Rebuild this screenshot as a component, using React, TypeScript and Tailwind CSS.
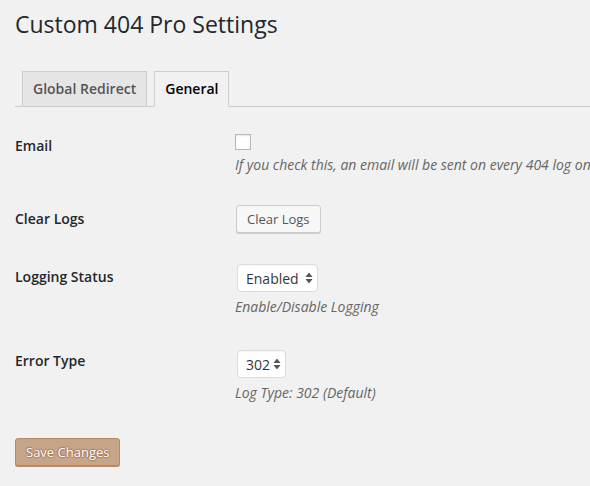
import React from "react";

function SelectArrows() {
  return (
    <svg width="8" height="12" viewBox="0 0 8 12" className="shrink-0">
      <path d="M4 0.5 L7.5 5 L0.5 5 Z" fill="#555" />
      <path d="M0.5 7 L7.5 7 L4 11.5 Z" fill="#555" />
    </svg>
  );
}

function FakeSelect({ value, width }: { value: string; width: string }) {
  return (
    <div
      className={`flex h-[28px] items-center justify-between rounded-[4px] border border-[#ddd] bg-white pl-[8px] pr-[4px] text-[14px] text-[#32373c] shadow-[inset_0_1px_2px_rgba(0,0,0,0.04)] ${width}`}
    >
      <span>{value}</span>
      <SelectArrows />
    </div>
  );
}

export default function App() {
  return (
    <div
      className="min-h-[486px] overflow-hidden bg-[#f1f1f1] pl-[15px] text-[#23282d]"
      style={{ fontFamily: '"Open Sans", "Liberation Sans", sans-serif' }}
    >
      <h1 className="pt-[10px] text-[23px] font-normal leading-[29px]">
        Custom 404 Pro Settings
      </h1>

      {/* tabs */}
      <div className="mt-[32px] flex border-b border-[#ccc] pl-[7px]">
        <div className="mb-[-1px] h-[36px] border border-[#ccc] bg-[#e5e5e5] px-[10px] text-[14px] font-semibold leading-[34px] text-[#555]">
          Global Redirect
        </div>
        <div className="mb-[-1px] ml-[7px] h-[36px] border border-[#ccc] border-b-[#f1f1f1] bg-[#f1f1f1] px-[10px] text-[14px] font-semibold leading-[34px] text-black">
          General
        </div>
      </div>

      {/* form rows */}
      <div className="mt-[10px]">
        <div className="flex h-[73px]">
          <div className="w-[220px] shrink-0 pt-[20px] text-[14px] font-semibold leading-[18px]">Email</div>
          <div className="min-w-0 pt-[17px]">
            <div className="h-[16px] w-[16px] border border-[#b4b9be] bg-white shadow-[inset_0_1px_2px_rgba(0,0,0,0.1)]" />
            <p className="mt-[4px] whitespace-nowrap text-[14px] italic leading-[21px] text-[#666]">
              If you check this, an email will be sent on every 404 log on the admin email account.
            </p>
          </div>
        </div>

        <div className="flex h-[58px]">
          <div className="w-[220px] shrink-0 pt-[20px] text-[14px] font-semibold leading-[18px]">Clear Logs</div>
          <div className="pt-[15px]">
            <button className="ml-[1px] h-[28px] rounded-[3px] border border-[#ccc] bg-[#f7f7f7] px-[10px] text-[13px] leading-[26px] text-[#555] shadow-[0_1px_0_#ccc]">
              Clear Logs
            </button>
          </div>
        </div>

        <div className="flex h-[84px]">
          <div className="w-[220px] shrink-0 pt-[20px] text-[14px] font-semibold leading-[18px]">Logging Status</div>
          <div className="pt-[16px]">
            <div className="ml-[2px]">
              <FakeSelect value="Enabled" width="w-[81px]" />
            </div>
            <p className="mt-[4px] text-[14px] italic leading-[21px] text-[#666]">Enable/Disable Logging</p>
          </div>
        </div>

        <div className="flex h-[90px]">
          <div className="w-[220px] shrink-0 pt-[20px] text-[14px] font-semibold leading-[18px]">Error Type</div>
          <div className="pt-[18px]">
            <div className="ml-[2px]">
              <FakeSelect value="302" width="w-[49px]" />
            </div>
            <p className="mt-[4px] text-[14px] italic leading-[21px] text-[#666]">Log Type: 302 (Default)</p>
          </div>
        </div>
      </div>

      <button className="mt-[16px] h-[28px] rounded-[3px] border border-[#b78a66] bg-[#c7a589] px-[10px] text-[13px] font-medium leading-[26px] text-white shadow-[0_1px_0_#b78a66] [text-shadow:0_-1px_1px_#a87b58,1px_0_1px_#a87b58,0_1px_1px_#a87b58,-1px_0_1px_#a87b58]">
        Save Changes
      </button>
    </div>
  );
}
